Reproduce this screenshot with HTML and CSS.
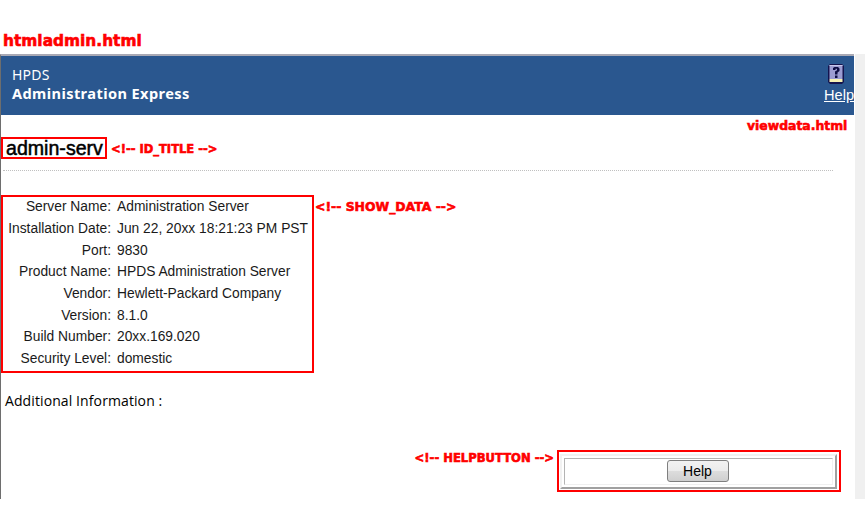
FILE: index.html
```html
<!DOCTYPE html>
<html lang="en">
<head>
<meta charset="utf-8">
<title>htmladmin.html</title>
<link rel="stylesheet" href="styles.css">
</head>
<body>
<header class="page-label"><span class="note note-file">htmladmin.html</span></header>
<div class="window">
  <main class="content">
    <div class="banner">
      <div class="banner-titles">
        <div class="product">HPDS</div>
        <div class="app">Administration Express</div>
      </div>
      <a class="banner-help" href="#">
        <svg class="help-icon" width="16" height="20" viewBox="0 0 16 20" aria-hidden="true">
          <path d="M2 0H14L16 2V18L14 20H2L0 18V2Z" fill="#14144e"/>
          <rect x="1.500" y="1" width="13" height="14" fill="#9c9cd2"/>
          <rect x="1.500" y="1" width="13" height="1" fill="#c8c8ec"/>
          <rect x="1.500" y="15" width="13" height="3" fill="#f6f2b4"/>
          <path d="M5 6V4L6.500 3H10L11.500 4.500V7L9.500 8.500V10.500H7V7.500L9 6.300V4.800H7.500V6Z" fill="#0e0e44"/>
          <rect x="7" y="11.500" width="2.500" height="2.500" fill="#0e0e44"/>
        </svg>
        <span class="help-link">Help</span>
      </a>
    </div>
    <div class="view">
      <span class="note note-view">viewdata.html</span>
      <div class="title-row">
        <h1 class="id-title">admin-serv</h1>
        <span class="note note-comment note-id">&lt;!-- ID_TITLE --&gt;</span>
      </div>
      <hr class="rule">
      <div class="data-row">
        <dl class="show-data">
          <dt>Server Name:</dt><dd>Administration Server</dd>
          <dt>Installation Date:</dt><dd>Jun 22, 20xx 18:21:23 PM PST</dd>
          <dt>Port:</dt><dd>9830</dd>
          <dt>Product Name:</dt><dd>HPDS Administration Server</dd>
          <dt>Vendor:</dt><dd>Hewlett-Packard Company</dd>
          <dt>Version:</dt><dd>8.1.0</dd>
          <dt>Build Number:</dt><dd>20xx.169.020</dd>
          <dt>Security Level:</dt><dd>domestic</dd>
        </dl>
        <span class="note note-comment note-data">&lt;!-- SHOW_DATA --&gt;</span>
      </div>
      <p class="additional">Additional Information :</p>
      <div class="button-row">
        <span class="note note-comment note-helpbutton">&lt;!-- HELPBUTTON --&gt;</span>
        <div class="button-mark">
          <div class="button-bevel">
            <div class="button-inner"><button class="help-button" type="button">Help</button></div>
          </div>
        </div>
      </div>
    </div>
  </main>
  <div class="scrollbar"></div>
</div>
</body>
</html>
```
FILE: styles.css
```css
* { box-sizing: border-box; }
html, body { margin: 0; padding: 0; background: #fff; }
body { width: 865px; height: 510px; overflow: hidden; font-family: "Liberation Sans", Arial, sans-serif; color: #000; }

.note {
  font-family: "DejaVu Sans", Verdana, sans-serif;
  font-weight: 700;
  color: #f00;
  -webkit-text-stroke: 0.6px #f00;
  white-space: nowrap;
}

.page-label { height: 54px; padding: 32px 0 0 3px; line-height: 18px; }
.note-file { font-size: 15.400px; }

.window {
  display: flex;
  height: 445px;
}
.content { width: 854px; border-top: 2px solid #a9a9b4; border-left: 1px solid #6e6e6e; }
.scrollbar { width: 10px; margin-left: 1px; background: #f0f0f0; }

.banner {
  display: flex;
  justify-content: space-between;
  height: 59px;
  background: #2a578f;
  color: #fff;
}
.banner-titles { padding: 10px 0 0 11px; font-family: "Noto Sans", "DejaVu Sans", sans-serif; }
.product { font-size: 14px; line-height: 18px; letter-spacing: 0.2px; }
.app { font-size: 14.600px; line-height: 19px; font-weight: 700; letter-spacing: 0.4px; }
.banner-help { display: flex; flex-direction: column; align-items: flex-start; width: 30px; padding-top: 8px; color: #fff; text-decoration: none; overflow: hidden; }
.help-icon { display: block; margin-left: 4px; flex: none; }
.help-link { font-size: 14.600px; line-height: 17px; margin-top: 3px; text-decoration: underline; }

.view { position: relative; padding-top: 22px; }
.note-view { position: absolute; top: 3px; left: 746px; font-size: 12.400px; }

.title-row { display: flex; align-items: center; height: 22px; }
.id-title {
  margin: 0;
  width: 106px;
  height: 22px;
  padding: 0 0 0 3px;
  border: 2px solid #f00;
  font-size: 19.600px;
  font-weight: 400;
  line-height: 19px;
  -webkit-text-stroke: 0.5px #000;
  white-space: nowrap;
}
.note-comment { font-size: 12px; margin-left: 4px; }
.note-id { font-size: 11.500px; margin-top: 1px; }

.rule { margin: 11px 21px 0 2px; border: 0; border-top: 1px dotted #c0c0c0; }

.data-row { display: flex; align-items: flex-start; margin-top: 24px; }
.show-data {
  display: grid;
  grid-template-columns: 108px 1fr;
  grid-auto-rows: 21.700px;
  align-items: center;
  column-gap: 6px;
  width: 313px;
  height: 178px;
  margin: 0;
  padding: 0;
  border: 2px solid #f00;
  font-size: 13.800px;
  color: #1a1a1a;
}
.show-data dt { text-align: right; margin-bottom: 2px; }
.show-data dd { margin: 0 0 2px; white-space: nowrap; }
.note-data { font-size: 12.400px; margin-left: 1px; margin-top: 4px; }

.additional {
  margin: 18px 0 0 4px;
  font-family: "Open Sans", "DejaVu Sans", sans-serif;
  font-size: 14px;
  line-height: 20px;
  letter-spacing: 0.1px;
}

.button-row { display: flex; justify-content: flex-end; align-items: flex-start; margin-top: 39px; padding-right: 13px; }
.note-helpbutton { font-size: 11.600px; margin: 1px 3px 0 0; line-height: 14px; }
.button-mark { width: 284px; height: 42px; border: 2px solid #f00; padding: 2px 2px 0 1px; }
.button-bevel { height: 35px; border: 2px solid; border-color: #f2f2f2 #a0a0a0 #a0a0a0 #f2f2f2; padding: 2px; }
.button-inner { display: flex; justify-content: center; align-items: flex-start; height: 27px; padding: 1px 2px 0 0; border: 1px solid; border-color: #b4b4b4 #f0f0f0 #f0f0f0 #b4b4b4; }
.help-button {
  width: 62px;
  height: 22px;
  padding: 0;
  border: 1px solid #7f7f7f;
  border-radius: 3px;
  background: linear-gradient(#f2f2f2 0%, #ebebeb 50%, #dddddd 50%, #cfcfcf 100%);
  font: 14px "Liberation Sans", Arial, sans-serif;
  color: #000;
}
```
